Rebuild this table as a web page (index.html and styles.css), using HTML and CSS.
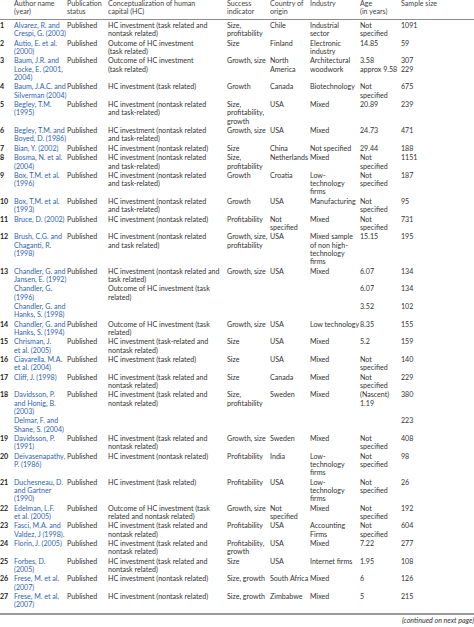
FILE: index.html
```html
<!DOCTYPE html>
<html>
<head>
<meta charset="utf-8">
<link rel="stylesheet" href="styles.css">
</head>
<body>
<table class="data">
<colgroup>
<col class="c-num"><col class="c-auth"><col class="c-stat"><col class="c-conc"><col class="c-succ"><col class="c-ctry"><col class="c-ind"><col class="c-age"><col class="c-size">
</colgroup>
<thead>
<tr><th></th><th>Author name<br>(year)</th><th>Publication<br>status</th><th>Conceptualization of human<br>capital (HC)</th><th>Success<br>indicator</th><th>Country of<br>origin</th><th>Industry</th><th>Age<br>(in years)</th><th>Sample size</th></tr>
</thead>
<tbody>
<tr class="first"><td class="n">1</td><td class="a">Alvarez, R. and<br>Crespi, G. (2003)</td><td>Published</td><td>HC investment (task related and<br>nontask related)</td><td>Size,<br>profitability</td><td>Chile</td><td>Industrial<br>sector</td><td>Not<br>specified</td><td>1091</td></tr>
<tr><td class="n">2</td><td class="a">Autio, E. et al.<br>(2000)</td><td>Published</td><td>Outcome of HC investment<br>(task related)</td><td>Size</td><td>Finland</td><td>Electronic<br>industry</td><td>14.85</td><td>59</td></tr>
<tr><td class="n">3</td><td class="a">Baum, J.R. and<br>Locke, E. (2001,<br>2004)</td><td>Published</td><td>Outcome of HC investment<br>(task related)</td><td>Growth, size</td><td>North<br>America</td><td>Architectural<br>woodwork</td><td>3.58<br>approx 9.58</td><td>307<br>229</td></tr>
<tr><td class="n">4</td><td class="a">Baum, J.A.C. and<br>Silverman (2004)</td><td>Published</td><td>HC investment (task related)</td><td>Growth</td><td>Canada</td><td>Biotechnology</td><td>Not<br>specified</td><td>675</td></tr>
<tr><td class="n">5</td><td class="a">Begley, T.M.<br>(1995)</td><td>Published</td><td>HC investment (nontask related<br>and task-related)</td><td>Size,<br>profitability,<br>growth</td><td>USA</td><td>Mixed</td><td>20.89</td><td>239</td></tr>
<tr><td class="n">6</td><td class="a">Begley, T.M. and<br>Boyed, D. (1986)</td><td>Published</td><td>HC investment (nontask related<br>and task-related)</td><td>Growth, size</td><td>USA</td><td>Mixed</td><td>24.73</td><td>471</td></tr>
<tr><td class="n">7</td><td class="a">Bian, Y. (2002)</td><td>Published</td><td>HC investment (nontask related)</td><td>Size</td><td>China</td><td>Not specified</td><td>29.44</td><td>188</td></tr>
<tr><td class="n">8</td><td class="a">Bosma, N. et al.<br>(2004)</td><td>Published</td><td>HC investment (nontask related<br>and task-related)</td><td>Size,<br>profitability</td><td>Netherlands</td><td>Mixed</td><td>Not<br>specified</td><td>1151</td></tr>
<tr><td class="n">9</td><td class="a">Box, T.M. et al.<br>(1996)</td><td>Published</td><td>HC investment (nontask related<br>and task-related)</td><td>Growth</td><td>Croatia</td><td>Low-<br>technology<br>firms</td><td>Not<br>specified</td><td>187</td></tr>
<tr><td class="n">10</td><td class="a">Box, T.M. et al.<br>(1993)</td><td>Published</td><td>HC investment (nontask related<br>and task-related)</td><td>Growth</td><td>USA</td><td>Manufacturing</td><td>Not<br>specified</td><td>95</td></tr>
<tr><td class="n">11</td><td class="a">Bruce, D. (2002)</td><td>Published</td><td>HC investment (nontask related)</td><td>Profitability</td><td>Not<br>specified</td><td>Mixed</td><td>Not<br>specified</td><td>731</td></tr>
<tr><td class="n">12</td><td class="a">Brush, C.G. and<br>Chaganti, R.<br>(1998)</td><td>Published</td><td>HC investment (nontask related<br>and task related)</td><td>Growth, size,<br>profitability</td><td>USA</td><td>Mixed sample<br>of non high-<br>technology<br>firms</td><td>15.15</td><td>195</td></tr>
<tr><td class="n">13</td><td class="a">Chandler, G. and<br>Jansen, E. (1992)</td><td>Published</td><td>HC investment (nontask related and<br>task related)</td><td>Growth, size</td><td>USA</td><td>Mixed</td><td>6.07</td><td>134</td></tr>
<tr><td class="n"></td><td class="a">Chandler, G.<br>(1996)</td><td></td><td>Outcome of HC investment (task<br>related)</td><td></td><td></td><td></td><td>6.07</td><td>134</td></tr>
<tr><td class="n"></td><td class="a">Chandler, G. and<br>Hanks, S. (1998)</td><td></td><td></td><td></td><td></td><td></td><td>3.52</td><td>102</td></tr>
<tr><td class="n">14</td><td class="a">Chandler, G. and<br>Hanks, S. (1994)</td><td>Published</td><td>Outcome of HC investment (task<br>related)</td><td>Growth, size</td><td>USA</td><td>Low technology</td><td>8.35</td><td>155</td></tr>
<tr><td class="n">15</td><td class="a">Chrisman, J.<br>et al. (2005)</td><td>Published</td><td>HC investment (task-related and<br>nontask related)</td><td>Size</td><td>USA</td><td>Mixed</td><td>5.2</td><td>159</td></tr>
<tr><td class="n">16</td><td class="a">Ciavarella, M.A.<br>et al. (2004)</td><td>Published</td><td>HC investment (task related)</td><td>Size</td><td>USA</td><td>Mixed</td><td>Not<br>specified</td><td>140</td></tr>
<tr><td class="n">17</td><td class="a">Cliff, J. (1998)</td><td>Published</td><td>HC investment (task related and<br>nontask related)</td><td>Size</td><td>Canada</td><td>Mixed</td><td>Not<br>specified</td><td>229</td></tr>
<tr><td class="n">18</td><td class="a">Davidsson, P.<br>and Honig, B.<br>(2003)</td><td>Published</td><td>HC investment (task related and<br>nontask related)</td><td>Size,<br>profitability</td><td>Sweden</td><td>Mixed</td><td>(Nascent)<br>1.19</td><td>380</td></tr>
<tr><td class="n"></td><td class="a">Delmar, F. and<br>Shane, S. (2004)</td><td></td><td></td><td></td><td></td><td></td><td></td><td>223</td></tr>
<tr><td class="n">19</td><td class="a">Davidsson, P.<br>(1991)</td><td>Published</td><td>HC investment (task related and<br>nontask related)</td><td>Growth, size</td><td>Sweden</td><td>Mixed</td><td>Not<br>specified</td><td>408</td></tr>
<tr><td class="n">20</td><td class="a">Deivasenapathy,<br>P. (1986)</td><td>Published</td><td>HC investment (nontask related)</td><td>Profitability</td><td>India</td><td>Low-<br>technology<br>firms</td><td>Not<br>specified</td><td>98</td></tr>
<tr><td class="n">21</td><td class="a">Duchesneau, D.<br>and Gartner<br>(1990)</td><td>Published</td><td>HC investment (task related)</td><td>Profitability</td><td>USA</td><td>Low-<br>technology<br>firms</td><td>Not<br>specified</td><td>26</td></tr>
<tr><td class="n">22</td><td class="a">Edelman, L.F.<br>et al. (2005)</td><td>Published</td><td>Outcome of HC investment (task<br>related and nontask related)</td><td>Growth, size</td><td>Not<br>specified</td><td>Mixed</td><td>Not<br>specified</td><td>192</td></tr>
<tr><td class="n">23</td><td class="a">Fasci, M.A. and<br>Valdez, J (1998).</td><td>Published</td><td>HC investment (task related and<br>nontask related)</td><td>Profitability</td><td>USA</td><td>Accounting<br>Firms</td><td>Not<br>specified</td><td>604</td></tr>
<tr><td class="n">24</td><td class="a">Florin, J. (2005)</td><td>Published</td><td>HC investment (task related and<br>nontask related)</td><td>Profitability,<br>growth</td><td>USA</td><td>Mixed</td><td>7.22</td><td>277</td></tr>
<tr><td class="n">25</td><td class="a">Forbes, D.<br>(2005)</td><td>Published</td><td>HC investment (task related and<br>nontask related)</td><td>Size</td><td>USA</td><td>Internet firms</td><td>1.95</td><td>108</td></tr>
<tr><td class="n">26</td><td class="a">Frese, M. et al.<br>(2007)</td><td>Published</td><td>HC investment (nontask related)</td><td>Size, growth</td><td>South Africa</td><td>Mixed</td><td>6</td><td>126</td></tr>
<tr class="last"><td class="n">27</td><td class="a">Frese, M. et al.<br>(2007)</td><td>Published</td><td>HC investment (nontask related)</td><td>Size, growth</td><td>Zimbabwe</td><td>Mixed</td><td>5</td><td>215</td></tr>
</tbody>
</table>
<p class="cont">(continued on next page)</p>
</body>
</html>
```

FILE: styles.css
```css
html, body {
  margin: 0;
  padding: 0;
  background: #ffffff;
}
body {
  width: 474px;
  overflow: hidden;
  font-family: "Lato", "Liberation Sans", sans-serif;
  font-size: 7.1px;
  line-height: 8.3px;
  color: #333333;
}
.data {
  width: 474px;
  table-layout: fixed;
  border-collapse: collapse;
  border-spacing: 0;
}
.c-num { width: 14px; }
.c-auth { width: 53px; }
.c-stat { width: 41px; }
.c-conc { width: 119px; }
.c-succ { width: 43px; }
.c-ctry { width: 40px; }
.c-ind { width: 50px; }
.c-age { width: 41px; }
.c-size { width: 73px; }
.data th {
  font-weight: normal;
  text-align: left;
  vertical-align: top;
  color: #444444;
  padding: 0 0 2px 0;
  white-space: nowrap;
  border-bottom: 1px solid #8c8c8c;
}
.data td {
  vertical-align: top;
  padding: 1.1px 0 0 0;
  white-space: nowrap;
}
.data tr.first td {
  padding-top: 2.5px;
}
.data tr.last td {
  padding-bottom: 3px;
  border-bottom: 2px solid #9a9a9a;
}
.data td.n {
  color: #222222;
  font-weight: bold;
}
.data td.a {
  color: #2f63b3;
}
.cont {
  margin: 2px 0 0 0;
  text-align: right;
  font-style: italic;
  color: #333333;
}
```
